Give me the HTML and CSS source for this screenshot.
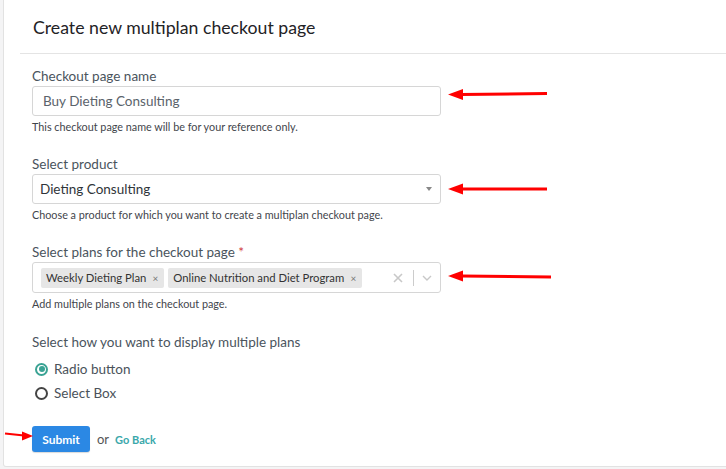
FILE: index.html
```html
<!DOCTYPE html>
<html>
<head>
<meta charset="utf-8">
<link rel="stylesheet" href="styles.css">
</head>
<body>
<div class="card">
  <div class="card-header">
    <h1 class="title">Create new multiplan checkout page</h1>
  </div>
  <div class="divider"></div>
  <form class="form">
    <div class="group">
      <label class="label">Checkout page name</label>
      <div class="input">Buy Dieting Consulting</div>
      <p class="help">This checkout page name will be for your reference only.</p>
    </div>
    <div class="group">
      <label class="label">Select product</label>
      <div class="input select">
        <span class="select-value">Dieting Consulting</span>
        <span class="caret"></span>
      </div>
      <p class="help">Choose a product for which you want to create a multiplan checkout page.</p>
    </div>
    <div class="group">
      <label class="label">Select plans for the checkout page <span class="req">*</span></label>
      <div class="input multi">
        <div class="tags">
          <span class="tag"><span class="tag-text">Weekly Dieting Plan</span><span class="tag-x">×</span></span>
          <span class="tag"><span class="tag-text">Online Nutrition and Diet Program</span><span class="tag-x">×</span></span>
        </div>
        <div class="indicators">
          <svg class="clear" width="14" height="14" viewBox="0 0 14 14"><path d="M3 3 L11 11 M11 3 L3 11" stroke="#c8c8c8" stroke-width="1.6" fill="none"/></svg>
          <span class="sep"></span>
          <svg class="chev" width="14" height="14" viewBox="0 0 14 14"><path d="M3 5 L7 9 L11 5" stroke="#c8c8c8" stroke-width="1.4" fill="none"/></svg>
        </div>
      </div>
      <p class="help">Add multiple plans on the checkout page.</p>
    </div>
    <div class="group radios">
      <p class="label">Select how you want to display multiple plans</p>
      <div class="radio"><span class="dot checked"></span>Radio button</div>
      <div class="radio"><span class="dot"></span>Select Box</div>
    </div>
    <div class="actions">
      <button type="button" class="btn">Submit</button>
      <span class="or">or</span>
      <a class="back">Go Back</a>
    </div>
  </form>
</div>

<svg class="arrow a1" width="104" height="14" viewBox="0 0 104 14"><path d="M100 6.5 L14 7.5" stroke="#f00" stroke-width="3" fill="none"/><path d="M1 7.5 L16 2 L16 13 Z" fill="#f00"/></svg>
<svg class="arrow a2" width="104" height="14" viewBox="0 0 104 14"><path d="M100 7 L14 7" stroke="#f00" stroke-width="3" fill="none"/><path d="M1 7 L16 1.5 L16 12.5 Z" fill="#f00"/></svg>
<svg class="arrow a3" width="108" height="14" viewBox="0 0 108 14"><path d="M104 8 L14 7" stroke="#f00" stroke-width="3" fill="none"/><path d="M1 7 L16 1.5 L16 12.5 Z" fill="#f00"/></svg>
<svg class="arrow a4" width="32" height="12" viewBox="0 0 32 12"><path d="M1 3.5 L20 5.5" stroke="#f00" stroke-width="2" fill="none"/><path d="M29 6 L18 1.5 L18 10.5 Z" fill="#f00"/></svg>
</body>
</html>
```

FILE: styles.css
```css
* { box-sizing: border-box; }
html, body { margin: 0; padding: 0; }
body {
  background: #f4f4f5;
  font-family: "Lato", "Open Sans", sans-serif;
  color: #4d5660;
  width: 726px;
  height: 469px;
  overflow: hidden;
  position: relative;
}
.card {
  margin-left: 3px;
  width: 740px;
  height: 467px;
  background: #fff;
  border: 1px solid #e2e2e2;
  border-top: none;
  border-radius: 0 0 0 3px;
}
.card-header {
  padding: 16px 0 14px 29px;
}
.title {
  margin: 0;
  font-size: 17.7px;
  line-height: 23px;
  font-weight: 400;
  color: #1f2326;
}
.divider {
  margin-left: 16px;
  height: 1px;
  background: #e4e4e4;
}
.form {
  padding: 13px 0 0 28px;
  width: 437px;
}
.group { margin-bottom: 21px; }
.label {
  display: block;
  margin: 0 0 1px;
  font-size: 13.5px;
  line-height: 18px;
  color: #4a545d;
}
.req { color: #d0393a; }
.input {
  height: 30px;
  border: 1px solid #d6d6d6;
  border-radius: 3px;
  padding: 0 10px;
  display: flex;
  align-items: center;
  font-size: 13.5px;
  color: #5b636b;
}
.select { padding: 0 8px 0 7px; justify-content: space-between; color: #2f3439; }
.caret {
  width: 0; height: 0;
  border-left: 3.5px solid transparent;
  border-right: 3.5px solid transparent;
  border-top: 4px solid #888;
}
.help {
  margin: 4px 0 0;
  font-size: 10.8px;
  line-height: 14px;
  color: #3f454b;
}
.multi { height: 31px; padding: 0 6px 0 8px; justify-content: space-between; }
.tags { display: flex; gap: 4px; }
.tag {
  display: flex;
  align-items: center;
  flex-shrink: 0;
  white-space: nowrap;
  height: 20px;
  background: #e6e6e6;
  border-radius: 2px;
  padding-left: 5px;
  font-size: 11.3px;
  color: #333;
}
.tag-x { width: 18px; text-align: center; font-size: 10px; color: #777; }
.indicators { display: flex; align-items: center; }
.clear { margin-right: 8px; }
.sep { width: 1px; height: 16px; background: #ccc; margin-right: 6px; }
.radios { margin-top: 22px; margin-bottom: 0; }
.radios .label { margin-bottom: 6px; }
.radio {
  display: flex;
  align-items: center;
  height: 24px;
  font-size: 13.5px;
  color: #4a525a;
  padding-left: 3px;
}
.dot {
  width: 13px; height: 13px;
  border-radius: 50%;
  border: 2px solid #444;
  margin-right: 6px;
  position: relative;
}
.dot.checked { border-color: #3aa394; }
.dot.checked::after {
  content: "";
  position: absolute;
  left: 1.5px; top: 1.5px;
  width: 6px; height: 6px;
  border-radius: 50%;
  background: #3aa394;
}
.actions {
  margin-top: 21px;
  display: flex;
  align-items: center;
}
.btn {
  width: 58px;
  height: 26px;
  border: none;
  border-radius: 3px;
  background: #2b88e4;
  color: #fff;
  font-family: inherit;
  font-size: 12px;
  font-weight: 700;
  padding: 0;
  box-shadow: 0 1px 1px rgba(0,0,0,0.15);
}
.or { margin-left: 7px; font-size: 13px; color: #555; }
.back { margin-left: 6px; font-size: 11px; font-weight: 700; color: #3aa8ab; }
.arrow { position: absolute; }
.a1 { left: 447px; top: 87px; }
.a2 { left: 447px; top: 182px; }
.a3 { left: 447px; top: 269px; }
.a4 { left: 4px; top: 430px; }
```
